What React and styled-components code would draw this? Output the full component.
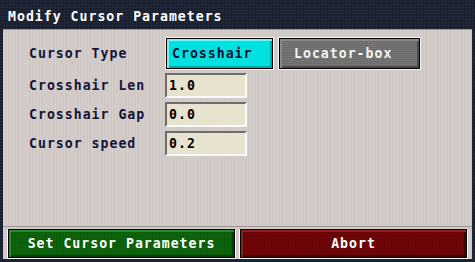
import React, { useState } from "react";
import styled, { createGlobalStyle } from "styled-components";

const Global = createGlobalStyle`
  html, body { margin: 0; padding: 0; background: #1b2131; }
  * { box-sizing: border-box; }
`

const Window = styled.div`
  width: 475px;
  height: 262px;
  display: flex;
  flex-direction: column;
  background-color: #1b2131;
  background-image: radial-gradient(#2b3346 0.8px, transparent 0.9px);
  background-size: 3px 3px;
  font-family: "DejaVu Sans Mono", "Liberation Mono", monospace;
  font-weight: bold;
  font-size: 13.2px;
  letter-spacing: 1px;
`

const TitleBar = styled.div`
  height: 29px;
  padding: 3px 0 0 8px;
  display: flex;
  align-items: center;
  color: #ffffff;
`

const Panel = styled.div`
  margin: 0 3px;
  height: 230px;
  display: flex;
  flex-direction: column;
  background-color: #cfc8c4;
  background-image: radial-gradient(#ddd6d2 0.7px, transparent 0.8px);
  background-size: 3px 2px;
  border-top: 1px solid #9a9590;
`

const Form = styled.div`
  flex: 1;
  padding: 8px 0 0 26px;
  display: grid;
  grid-template-columns: 136px auto;
  grid-auto-rows: min-content;
  row-gap: 4px;
  align-items: center;
`

const Label = styled.div`
  color: #12143a;
`

const Choices = styled.div`
  display: flex;
  gap: 5px;
`

const Choice = styled.button`
  height: 31px;
  width: ${p => p.$w}px;
  text-align: left;
  font: inherit;
  letter-spacing: inherit;
  border: 1px solid #000;
  box-shadow: 0 0 0 1px #f4f4f4, inset 2px 2px 0 ${p => p.$on ? "#6ff6f6" : "#8a8a8a"},
    inset -2px -2px 0 ${p => p.$on ? "#00a8a8" : "#4a4a4a"};
  margin-left: 1px;
  background-color: ${p => p.$on ? "#00e2e0" : "#6c6c6c"};
  background-image: ${p => p.$on ? "none" : "repeating-linear-gradient(#6c6c6c 0 1px, #767676 1px 2px)"};
  color: ${p => p.$on ? "#0c0c30" : "#f4f4f4"};
  padding: 0 0 0 ${p => p.$on ? 5 : 14}px;
  cursor: pointer;
`

const Field = styled.input`
  width: 82px;
  height: 25px;
  padding: 0 0 0 2px;
  font: inherit;
  letter-spacing: inherit;
  color: #000;
  background: #e8e3cf;
  border: none;
  border-top: 2px solid #6e6e6e;
  border-left: 2px solid #6e6e6e;
  border-bottom: 2px solid #fafafa;
  border-right: 2px solid #fafafa;
  outline: none;
`

const ButtonBar = styled.div`
  height: 33px;
  padding: 2px 5px 1px 5px;
  display: flex;
  gap: 5px;
  border-top: 1px solid #9a9590;
`

const Action = styled.button`
  flex: 1;
  font: inherit;
  letter-spacing: inherit;
  color: #ffffff;
  border: 1px solid #000;
  background-color: ${p => p.$bg};
  background-image: radial-gradient(${p => p.$dot} 0.7px, transparent 0.8px);
  background-size: 3px 3px;
  box-shadow: 1px 1px 0 #fff, -1px 1px 0 #fff,
    inset 2px 2px 0 ${p => p.$hi}, inset -2px -2px 0 ${p => p.$lo};
  cursor: pointer;
`

export default function App () {
  const [type, setType] = useState("Crosshair");
  const [len, setLen] = useState("1.0");
  const [gap, setGap] = useState("0.0");
  const [speed, setSpeed] = useState("0.2");

  return (
    <Window>
      <Global />
      <TitleBar>Modify Cursor Parameters</TitleBar>
      <Panel>
        <Form>
          <Label>Cursor Type</Label>
          <Choices>
            <Choice $w={107} $on={type === "Crosshair"} onClick={() => setType("Crosshair")}>Crosshair</Choice>
            <Choice $w={141} $on={type === "Locator-box"} onClick={() => setType("Locator-box")}>Locator-box</Choice>
          </Choices>
          <Label>Crosshair Len</Label>
          <Field value={len} onChange={e => setLen(e.target.value)} />
          <Label>Crosshair Gap</Label>
          <Field value={gap} onChange={e => setGap(e.target.value)} />
          <Label>Cursor speed</Label>
          <Field value={speed} onChange={e => setSpeed(e.target.value)} />
        </Form>
        <ButtonBar>
          <Action $bg="#0b5f0b" $dot="#137013" $hi="#2a8a2a" $lo="#063d06">Set Cursor Parameters</Action>
          <Action $bg="#6a0406" $dot="#7a0a0c" $hi="#902020" $lo="#420204">Abort</Action>
        </ButtonBar>
      </Panel>
    </Window>
  );
}
